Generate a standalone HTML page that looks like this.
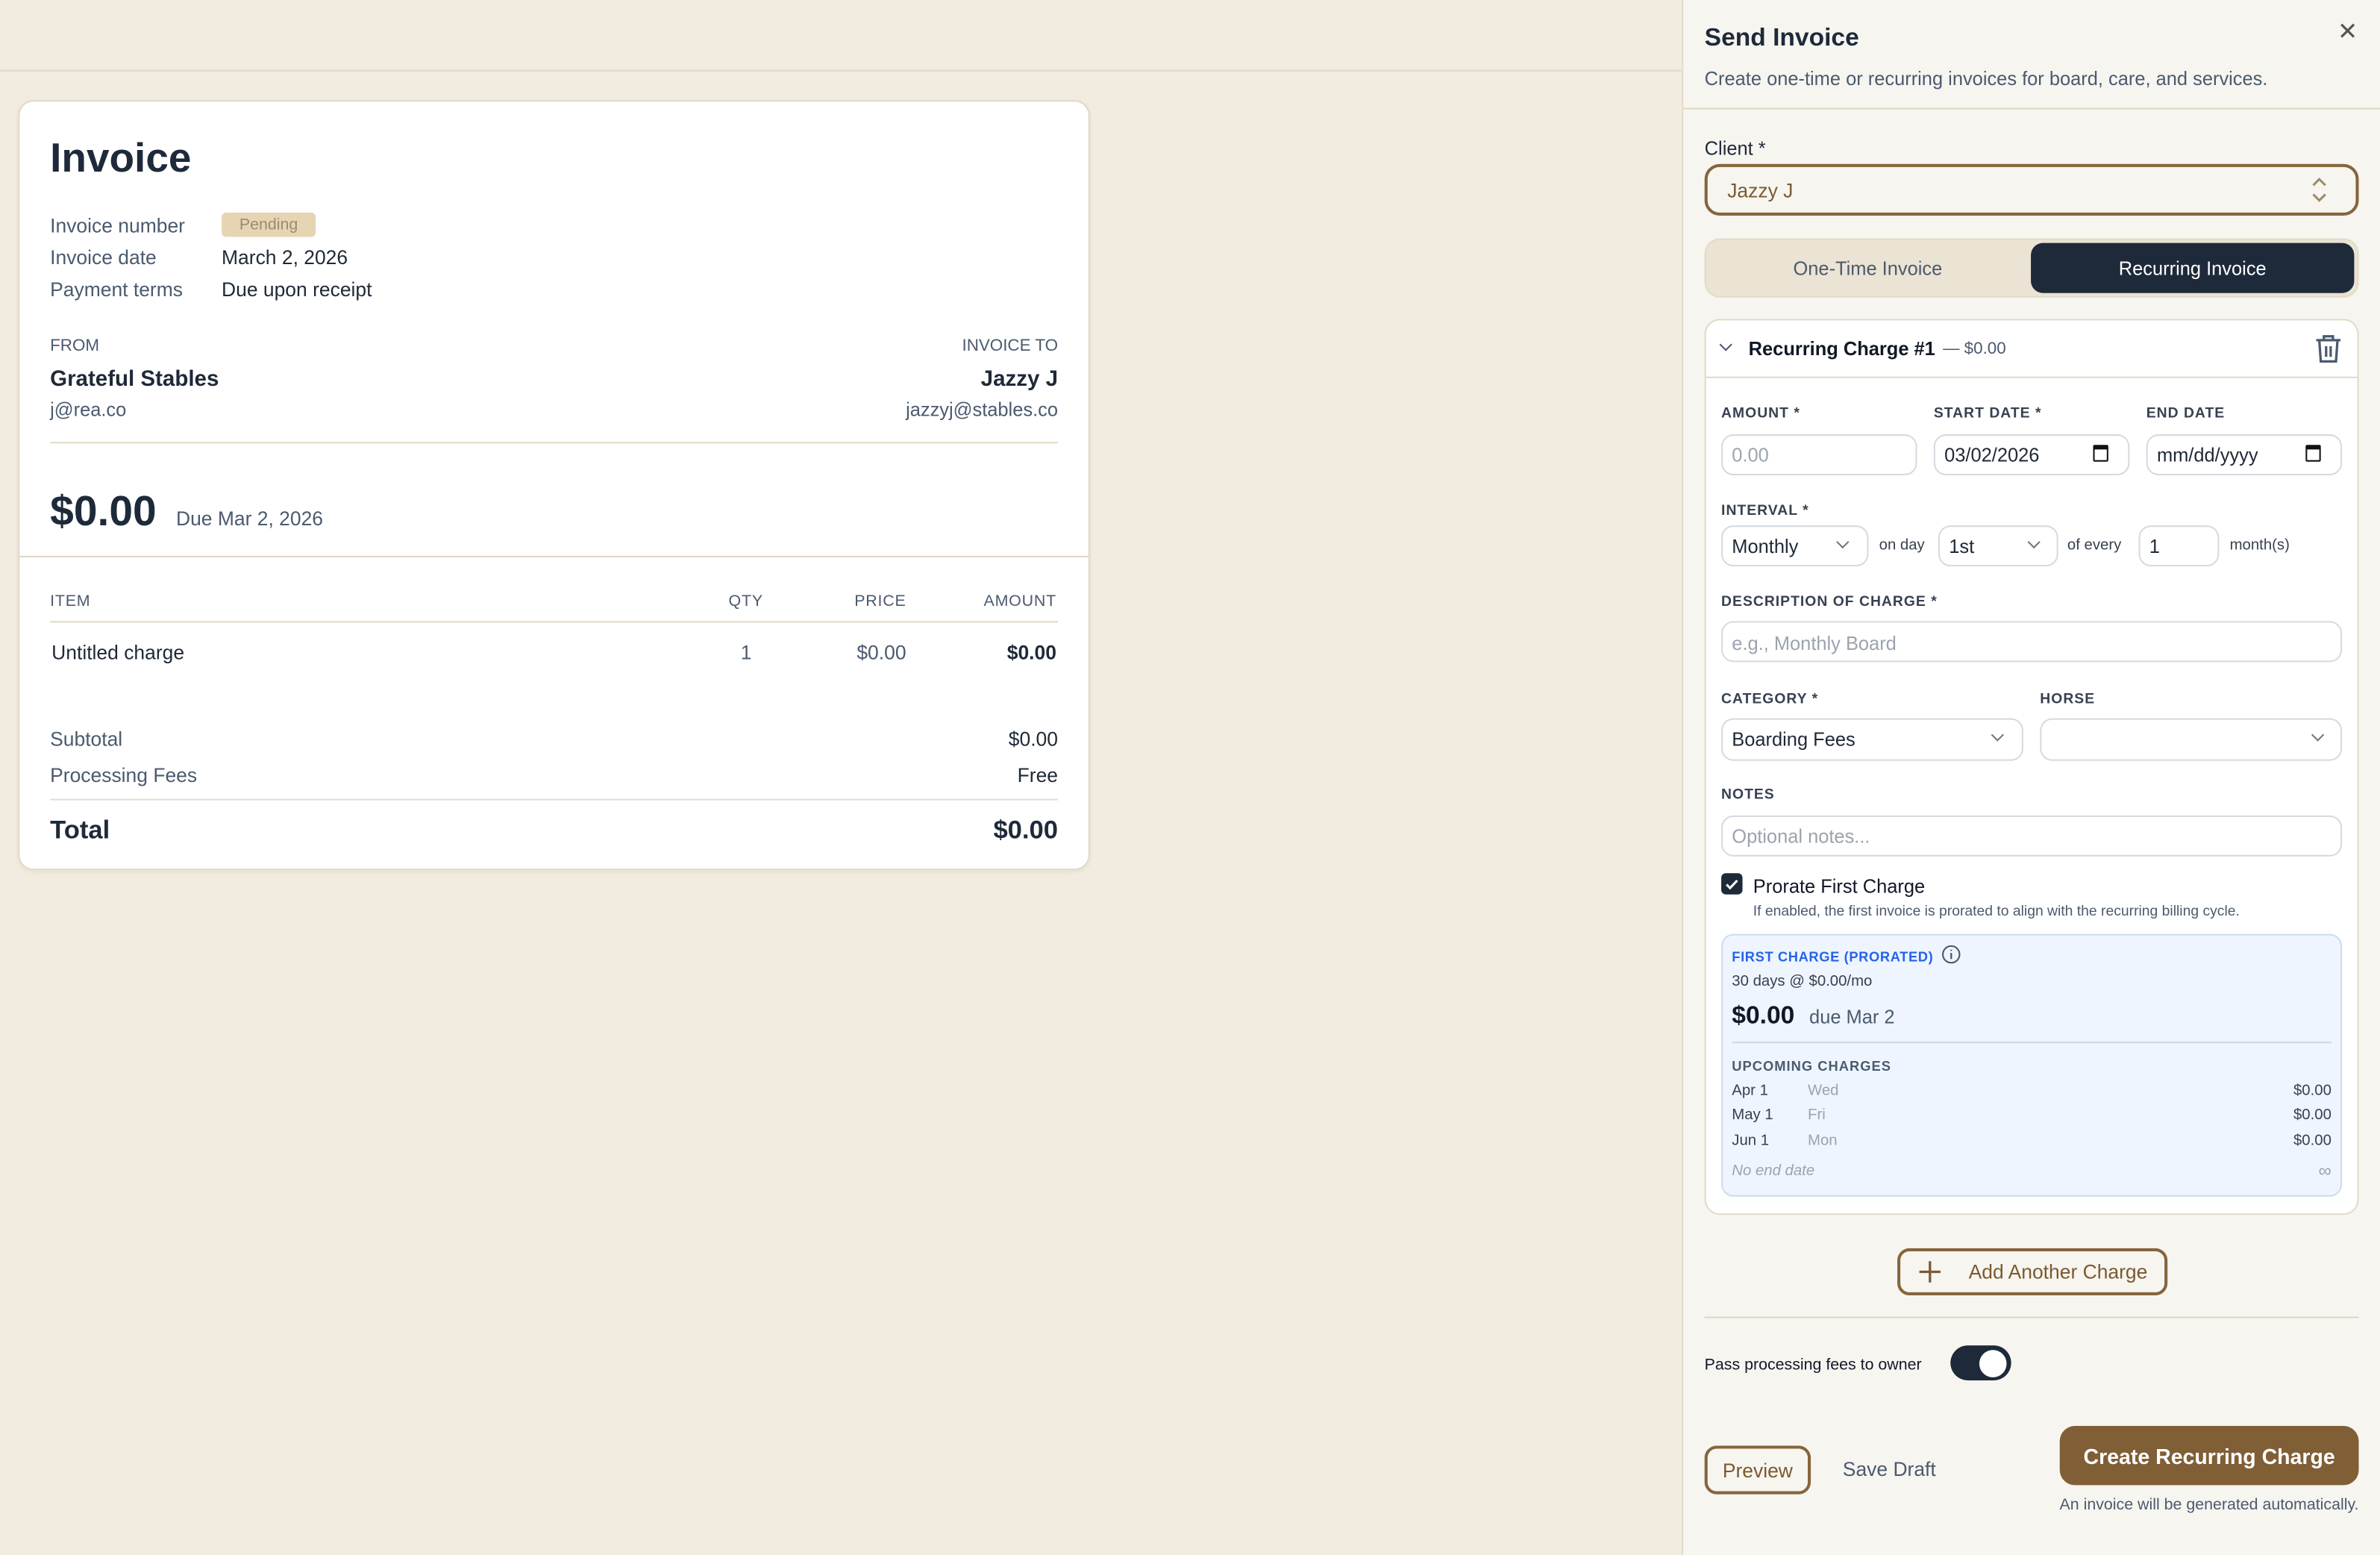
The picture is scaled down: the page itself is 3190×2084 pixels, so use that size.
<!DOCTYPE html>
<html><head><meta charset="utf-8"><style>
*{margin:0;padding:0;box-sizing:border-box}
html,body{width:3190px;height:2084px;overflow:hidden;background:#f2ebe0}
#s{position:absolute;left:0;top:0;width:1568px;height:1024px;transform:scale(2.03444,2.03516);transform-origin:0 0;font-family:"Liberation Sans",sans-serif;color:#1f2937}
.a{position:absolute}
.t{position:absolute;white-space:nowrap;line-height:20px;height:20px;transform:translateY(1px)}
.g{color:#4b5a6e}
.lb{font-size:9.5px;font-weight:bold;letter-spacing:.5px;color:#374151}
.in{position:absolute;background:#fff;border:1px solid #d5dae1;border-radius:8px}
.chev{position:absolute;width:6px;height:6px;border-right:1.3px solid #6b7280;border-bottom:1.3px solid #6b7280;transform:rotate(45deg)}
.r{text-align:right}
</style></head><body><div id="s">
<div class="a" style="left:0;top:46px;width:1108px;height:1px;background:#e0d6c4"></div>
<!-- invoice card -->
<div class="a" style="left:12px;top:66px;width:706px;height:507px;background:#fff;border:1px solid #e3dac8;border-radius:10px;box-shadow:0 1px 3px rgba(0,0,0,.06)"></div>
<div class="t" style="left:33px;top:83px;font-size:27px;font-weight:bold;line-height:40px;height:40px;color:#1e2a3a">Invoice</div>
<div class="t g" style="left:33px;top:138px;font-size:13px">Invoice number</div>
<div class="t g" style="left:33px;top:159px;font-size:13px">Invoice date</div>
<div class="t g" style="left:33px;top:180px;font-size:13px">Payment terms</div>
<div class="a" style="left:146px;top:140px;width:62px;height:16px;background:#e6d4b3;border-radius:3px;font-size:10.5px;color:#9a8c73;text-align:center;line-height:16px">Pending</div>
<div class="t" style="left:146px;top:159px;font-size:13px">March 2, 2026</div>
<div class="t" style="left:146px;top:180px;font-size:13px">Due upon receipt</div>
<div class="t g" style="left:33px;top:217px;font-size:11px">FROM</div>
<div class="t g r" style="right:871px;top:217px;font-size:11px">INVOICE TO</div>
<div class="t" style="left:33px;top:239px;font-size:14.5px;font-weight:bold">Grateful Stables</div>
<div class="t r" style="right:871px;top:239px;font-size:14.5px;font-weight:bold">Jazzy J</div>
<div class="t g" style="left:33px;top:259px;font-size:12.5px">j@rea.co</div>
<div class="t g r" style="right:871px;top:259px;font-size:12.5px">jazzyj@stables.co</div>
<div class="a" style="left:33px;top:291px;width:664px;height:1px;background:#e6dcc8"></div>
<div class="t" style="left:33px;top:316px;font-size:28px;font-weight:bold;line-height:40px;height:40px;color:#1e2a3a">$0.00</div>
<div class="t g" style="left:116px;top:331px;font-size:13px">Due Mar 2, 2026</div>
<div class="a" style="left:12px;top:366px;width:706px;height:1px;background:#e0d6c4"></div>
<div class="t g" style="left:33px;top:385px;font-size:10.5px;letter-spacing:.4px">ITEM</div>
<div class="t g" style="left:480px;top:385px;font-size:10.5px;letter-spacing:.4px">QTY</div>
<div class="t g r" style="right:971px;top:385px;font-size:10.5px;letter-spacing:.4px">PRICE</div>
<div class="t g r" style="right:872px;top:385px;font-size:10.5px;letter-spacing:.4px">AMOUNT</div>
<div class="a" style="left:33px;top:409px;width:664px;height:1px;background:#e0d6c4"></div>
<div class="t" style="left:34px;top:419px;font-size:13px">Untitled charge</div>
<div class="t g" style="left:488px;top:419px;font-size:13px">1</div>
<div class="t g r" style="right:971px;top:419px;font-size:13px">$0.00</div>
<div class="t r" style="right:872px;top:419px;font-size:13px;font-weight:bold">$0.00</div>
<div class="t g" style="left:33px;top:476px;font-size:13px">Subtotal</div>
<div class="t r" style="right:871px;top:476px;font-size:13px">$0.00</div>
<div class="t g" style="left:33px;top:500px;font-size:13px">Processing Fees</div>
<div class="t r" style="right:871px;top:500px;font-size:13px">Free</div>
<div class="a" style="left:33px;top:526px;width:664px;height:1px;background:#e6dcc8"></div>
<div class="t" style="left:33px;top:536px;font-size:17px;font-weight:bold;color:#1e2a3a">Total</div>
<div class="t r" style="right:871px;top:536px;font-size:17px;font-weight:bold;color:#1e2a3a">$0.00</div>

<!-- panel -->
<div class="a" style="left:1108px;top:0;width:460px;height:1024px;background:#f7f5f0;border-left:1px solid #e3dac8"></div>
<div class="t" style="left:1123px;top:14px;font-size:16.5px;font-weight:bold;color:#1e2a3a">Send Invoice</div>
<div class="t" style="left:1540px;top:11px;font-size:16px;color:#555">✕</div>
<div class="t g" style="left:1123px;top:41px;font-size:12.5px">Create one-time or recurring invoices for board, care, and services.</div>
<div class="a" style="left:1109px;top:71px;width:459px;height:1px;background:#e0d6c4"></div>
<div class="t" style="left:1123px;top:87px;font-size:12.5px;color:#1e2a3a">Client *</div>
<div class="a" style="left:1123px;top:108px;width:431px;height:34px;border:2px solid #86653c;border-radius:10px;background:#f7f5f0"></div>
<div class="t" style="left:1138px;top:115px;font-size:13px;color:#7a5a30">Jazzy J</div>
<svg class="a" style="left:1521px;top:115px" width="14" height="20" viewBox="0 0 14 20"><path d="M3 7l4-4 4 4M3 13l4 4 4-4" fill="none" stroke="#a08a6a" stroke-width="1.5"/></svg>
<div class="a" style="left:1123px;top:157px;width:431px;height:39px;background:#ebe3d3;border:1px solid #e3dac8;border-radius:10px"></div>
<div class="a" style="left:1338px;top:160px;width:213px;height:33px;background:#1e2a3a;border-radius:8px"></div>
<div class="t g" style="left:1123px;top:166px;width:215px;text-align:center;font-size:12.5px">One-Time Invoice</div>
<div class="t" style="left:1338px;top:166px;width:213px;text-align:center;font-size:12.5px;color:#fff">Recurring Invoice</div>

<div class="a" style="left:1123px;top:210px;width:431px;height:590px;background:#fff;border:1px solid #e3dac8;border-radius:10px"></div>
<div class="a" style="left:1124px;top:248px;width:429px;height:1px;background:#e3dac8"></div>
<div class="chev" style="left:1134px;top:224px;border-color:#4b5a6e"></div>
<div class="t" style="left:1152px;top:219px;font-size:12.5px;font-weight:bold;color:#111827">Recurring Charge #1</div>
<div class="t g" style="left:1280px;top:219px;font-size:11px">— $0.00</div>
<svg class="a" style="left:1524px;top:219px" width="20" height="21" viewBox="0 0 20 21"><path d="M2 5h16M7 5V2.5h6V5M4 5l1 14h10l1-14M8.5 9v7M11.5 9v7" fill="none" stroke="#4b5a6e" stroke-width="1.6"/></svg>

<div class="t lb" style="left:1134px;top:262px">AMOUNT *</div>
<div class="t lb" style="left:1274px;top:262px">START DATE *</div>
<div class="t lb" style="left:1414px;top:262px">END DATE</div>
<div class="in" style="left:1134px;top:286px;width:129px;height:27px"></div>
<div class="in" style="left:1274px;top:286px;width:129px;height:27px"></div>
<div class="in" style="left:1414px;top:286px;width:129px;height:27px"></div>
<div class="t" style="left:1141px;top:289px;font-size:12.5px;color:#9ca3af">0.00</div>
<div class="t" style="left:1281px;top:289px;font-size:12.5px">03/02/2026</div>
<div class="t" style="left:1421px;top:289px;font-size:12.5px">mm/dd/yyyy</div>
<div class="a" style="left:1379px;top:293px;width:10px;height:11px;border:1.5px solid #111;border-top-width:3px;border-radius:1px"></div>
<div class="a" style="left:1519px;top:293px;width:10px;height:11px;border:1.5px solid #111;border-top-width:3px;border-radius:1px"></div>

<div class="t lb" style="left:1134px;top:326px">INTERVAL *</div>
<div class="in" style="left:1134px;top:346px;width:97px;height:27px"></div>
<div class="t" style="left:1141px;top:349px;font-size:12.5px">Monthly</div>
<div class="chev" style="left:1211px;top:354px"></div>
<div class="t" style="left:1238px;top:349px;font-size:10px;color:#374151">on day</div>
<div class="in" style="left:1277px;top:346px;width:79px;height:27px"></div>
<div class="t" style="left:1284px;top:349px;font-size:12.5px">1st</div>
<div class="chev" style="left:1337px;top:354px"></div>
<div class="t" style="left:1362px;top:349px;font-size:10px;color:#374151">of every</div>
<div class="in" style="left:1409px;top:346px;width:53px;height:27px"></div>
<div class="t" style="left:1416px;top:349px;font-size:12.5px">1</div>
<div class="t" style="left:1469px;top:349px;font-size:10px;color:#374151">month(s)</div>

<div class="t lb" style="left:1134px;top:386px">DESCRIPTION OF CHARGE *</div>
<div class="in" style="left:1134px;top:409px;width:409px;height:27px"></div>
<div class="t" style="left:1141px;top:413px;font-size:12.5px;color:#9ca3af">e.g., Monthly Board</div>

<div class="t lb" style="left:1134px;top:450px">CATEGORY *</div>
<div class="t lb" style="left:1344px;top:450px">HORSE</div>
<div class="in" style="left:1134px;top:473px;width:199px;height:28px"></div>
<div class="t" style="left:1141px;top:476px;font-size:12.5px">Boarding Fees</div>
<div class="chev" style="left:1313px;top:481px"></div>
<div class="in" style="left:1344px;top:473px;width:199px;height:28px"></div>
<div class="chev" style="left:1524px;top:481px"></div>

<div class="t lb" style="left:1134px;top:513px">NOTES</div>
<div class="in" style="left:1134px;top:537px;width:409px;height:27px"></div>
<div class="t" style="left:1141px;top:540px;font-size:12.5px;color:#9ca3af">Optional notes...</div>

<div class="a" style="left:1134px;top:575px;width:14px;height:14px;background:#1e2a3a;border-radius:3px"></div>
<svg class="a" style="left:1134px;top:575px" width="14" height="14" viewBox="0 0 14 14"><path d="M3.5 7.5l2.3 2.3 4.7-5" fill="none" stroke="#fff" stroke-width="1.5"/></svg>
<div class="t" style="left:1155px;top:573px;font-size:12.5px;color:#111827">Prorate First Charge</div>
<div class="t g" style="left:1155px;top:590px;font-size:9.5px">If enabled, the first invoice is prorated to align with the recurring billing cycle.</div>

<div class="a" style="left:1134px;top:615px;width:409px;height:173px;background:#eef5fe;border:1px solid #cfdbea;border-radius:8px"></div>
<div class="t" style="left:1141px;top:619px;font-size:9px;font-weight:bold;letter-spacing:.3px;color:#2563eb">FIRST CHARGE (PRORATED)</div>
<svg class="a" style="left:1279px;top:622px" width="13" height="13" viewBox="0 0 13 13"><circle cx="6.5" cy="6.5" r="5.5" fill="none" stroke="#4b5563" stroke-width="1"/><path d="M6.5 5.5v4M6.5 3.4v.8" stroke="#4b5563" stroke-width="1.1"/></svg>
<div class="t" style="left:1141px;top:636px;font-size:10px;color:#374151">30 days @ $0.00/mo</div>
<div class="t" style="left:1141px;top:658px;font-size:16.5px;font-weight:bold;color:#111827">$0.00</div>
<div class="t g" style="left:1192px;top:659px;font-size:12.5px">due Mar 2</div>
<div class="a" style="left:1141px;top:686px;width:395px;height:1px;background:#cfd6df"></div>
<div class="t g" style="left:1141px;top:691px;font-size:9px;font-weight:bold;letter-spacing:.5px">UPCOMING CHARGES</div>
<div class="t" style="left:1141px;top:708px;font-size:10px;color:#374151">Apr 1</div><div class="t" style="left:1191px;top:708px;font-size:10px;color:#9ca3af">Wed</div><div class="t r" style="right:32px;top:708px;font-size:10px;color:#374151">$0.00</div>
<div class="t" style="left:1141px;top:724px;font-size:10px;color:#374151">May 1</div><div class="t" style="left:1191px;top:724px;font-size:10px;color:#9ca3af">Fri</div><div class="t r" style="right:32px;top:724px;font-size:10px;color:#374151">$0.00</div>
<div class="t" style="left:1141px;top:741px;font-size:10px;color:#374151">Jun 1</div><div class="t" style="left:1191px;top:741px;font-size:10px;color:#9ca3af">Mon</div><div class="t r" style="right:32px;top:741px;font-size:10px;color:#374151">$0.00</div>
<div class="t" style="left:1141px;top:761px;font-size:10px;font-style:italic;color:#9ca3af">No end date</div>
<div class="t r" style="right:32px;top:760px;font-size:12px;color:#9ca3af">∞</div>

<div class="a" style="left:1250px;top:822px;width:178px;height:31px;border:2px solid #86653c;border-radius:8px"></div>
<svg class="a" style="left:1263px;top:829px" width="17" height="17" viewBox="0 0 17 17"><path d="M8.5 1.5v14M1.5 8.5h14" stroke="#7a5a30" stroke-width="1.6"/></svg>
<div class="t" style="left:1297px;top:827px;font-size:13px;color:#7a5a30">Add Another Charge</div>
<div class="a" style="left:1123px;top:867px;width:431px;height:1px;background:#e0d6c4"></div>
<div class="t" style="left:1123px;top:888px;font-size:10.5px;color:#111827">Pass processing fees to owner</div>
<div class="a" style="left:1285px;top:886px;width:40px;height:23px;background:#1e2a3a;border-radius:12px"></div>
<div class="a" style="left:1304px;top:889px;width:18px;height:18px;background:#fff;border-radius:50%"></div>
<div class="a" style="left:1123px;top:952px;width:70px;height:32px;border:2px solid #86653c;border-radius:8px"></div>
<div class="t" style="left:1123px;top:958px;width:70px;text-align:center;font-size:13px;color:#7a5a30">Preview</div>
<div class="t g" style="left:1214px;top:957px;font-size:13px">Save Draft</div>
<div class="a" style="left:1357px;top:939px;width:197px;height:39px;background:#805f37;border-radius:10px"></div>
<div class="t" style="left:1357px;top:948px;width:197px;text-align:center;font-size:14px;font-weight:bold;color:#fff">Create Recurring Charge</div>
<div class="t g r" style="right:14px;top:980px;font-size:10.5px">An invoice will be generated automatically.</div>
</div></body></html>
